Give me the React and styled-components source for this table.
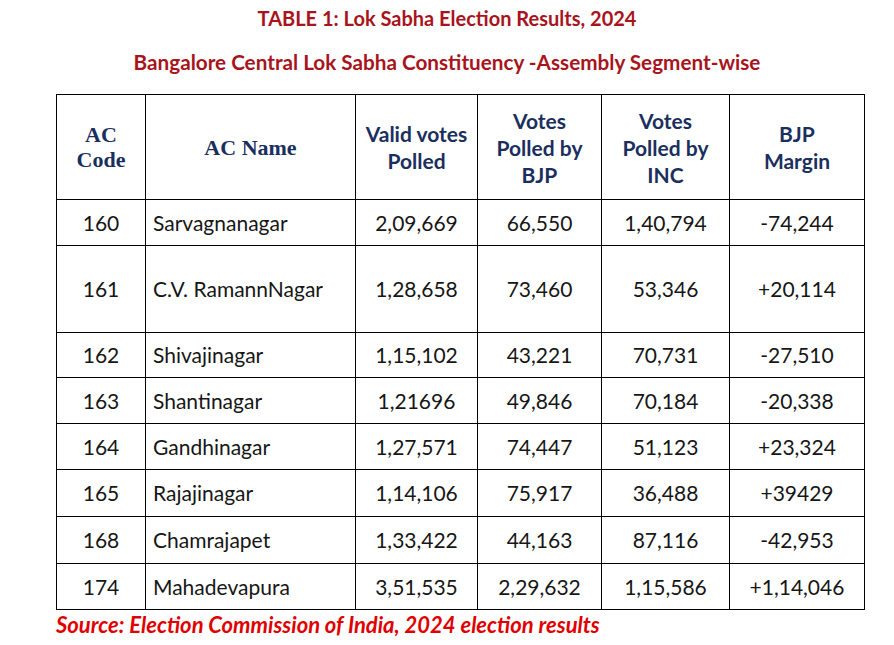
import styled, { createGlobalStyle } from "styled-components";

const GlobalStyle = createGlobalStyle`
  body {
    margin: 0;
    background: #ffffff;
    font-family: Lato, "Liberation Sans", sans-serif;
  }
`;

const COLS = [89, 210, 122, 124, 128, 135];

const ROWS = [
  { code: 160, name: "Sarvagnanagar", valid: "2,09,669", bjp: "66,550", inc: "1,40,794", margin: "-74,244", h: 46 },
  { code: 161, name: "C.V. RamannNagar", valid: "1,28,658", bjp: "73,460", inc: "53,346", margin: "+20,114", h: 87 },
  { code: 162, name: "Shivajinagar", valid: "1,15,102", bjp: "43,221", inc: "70,731", margin: "-27,510", h: 45 },
  { code: 163, name: "Shantinagar", valid: "1,21696", bjp: "49,846", inc: "70,184", margin: "-20,338", h: 46 },
  { code: 164, name: "Gandhinagar", valid: "1,27,571", bjp: "74,447", inc: "51,123", margin: "+23,324", h: 46 },
  { code: 165, name: "Rajajinagar", valid: "1,14,106", bjp: "75,917", inc: "36,488", margin: "+39429", h: 47 },
  { code: 168, name: "Chamrajapet", valid: "1,33,422", bjp: "44,163", inc: "87,116", margin: "-42,953", h: 47 },
  { code: 174, name: "Mahadevapura", valid: "3,51,535", bjp: "2,29,632", inc: "1,15,586", margin: "+1,14,046", h: 46 },
];

const Page = styled.div`
  width: 894px;
  height: 645px;
  display: flex;
  flex-direction: column;
`;

const Heading = styled.h1`
  margin: 0;
  text-align: center;
  color: #a8141c;
  font-weight: 700;
  font-size: ${(p) => p.$size}px;
  line-height: 24px;
  padding-top: ${(p) => p.$top}px;
`;

const Table = styled.table`
  margin: 20px 0 0 56px;
  border-collapse: collapse;
  table-layout: fixed;
  width: 808px;
`;

const HeadCell = styled.th`
  border: 1px solid #000;
  height: 104px;
  padding: 0 4px;
  color: #1b2f5e;
  text-align: center;
  vertical-align: middle;
  font-family: ${(p) => (p.$serif ? '"Liberation Serif", serif' : 'Lato, "Liberation Sans", sans-serif')};
  font-size: ${(p) => (p.$serif ? 22 : 21)}px;
  line-height: ${(p) => (p.$serif ? 25 : 27)}px;
  font-weight: 700;
`;

const Cell = styled.td`
  border: 1px solid #000;
  padding: 0 ${(p) => (p.$left ? 7 : 4)}px;
  text-align: ${(p) => (p.$left ? "left" : "center")};
  vertical-align: middle;
  color: #161616;
  font-size: 21px;
  line-height: 24px;
  white-space: nowrap;
`;

const Source = styled.p`
  margin: 3px 0 0 56px;
  color: #e00000;
  font-weight: 700;
  font-style: italic;
  font-size: 22px;
  line-height: 24px;
`;

export default function App() {
  return (
    <>
      <GlobalStyle />
      <Page>
        <Heading $size={20} $top={6}>TABLE 1: Lok Sabha Election Results, 2024</Heading>
        <Heading $size={20.7} $top={20}>Bangalore Central Lok Sabha Constituency -Assembly Segment-wise</Heading>
        <Table>
          <colgroup>
            {COLS.map((w, i) => (
              <col key={i} style={{ width: w }} />
            ))}
          </colgroup>
          <thead>
            <tr>
              <HeadCell $serif>AC<br />Code</HeadCell>
              <HeadCell $serif>AC Name</HeadCell>
              <HeadCell>Valid votes<br />Polled</HeadCell>
              <HeadCell>Votes<br />Polled by<br />BJP</HeadCell>
              <HeadCell>Votes<br />Polled by<br />INC</HeadCell>
              <HeadCell>BJP<br />Margin</HeadCell>
            </tr>
          </thead>
          <tbody>
            {ROWS.map((r) => (
              <tr key={r.code} style={{ height: r.h }}>
                <Cell>{r.code}</Cell>
                <Cell $left>{r.name}</Cell>
                <Cell>{r.valid}</Cell>
                <Cell>{r.bjp}</Cell>
                <Cell>{r.inc}</Cell>
                <Cell>{r.margin}</Cell>
              </tr>
            ))}
          </tbody>
        </Table>
        <Source>Source: Election Commission of India, 2024 election results</Source>
      </Page>
    </>
  );
}
